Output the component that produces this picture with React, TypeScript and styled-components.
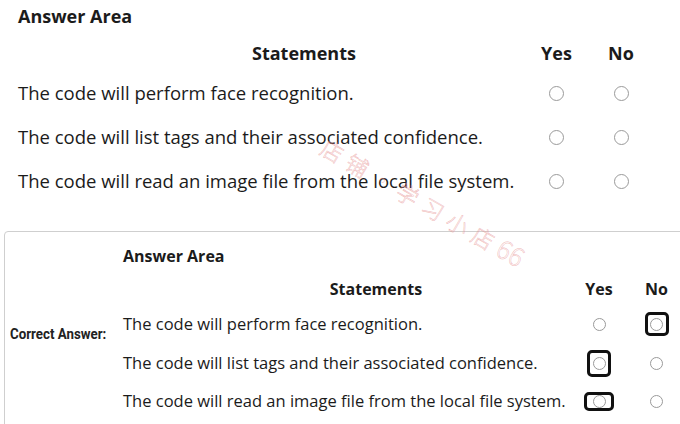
import React from "react";
import styled, { createGlobalStyle } from "styled-components";

const Global = createGlobalStyle`
  html, body { margin: 0; padding: 0; background: #ffffff; overflow: hidden; }
  body { font-family: "Open Sans", "Noto Sans", sans-serif; color: #1b1b1b; }
`;

const Page = styled.div`
  position: relative;
  width: 680px;
  height: 424px;
  overflow: hidden;
`;

const TopArea = styled.section`
  padding: 4px 0 0 18px;
`;

const Title = styled.div<{ $size: number }>`
  font-weight: 700;
  font-size: ${(p) => p.$size}px;
  line-height: ${(p) => p.$size + 6}px;
`;

const TopGrid = styled.div`
  display: grid;
  grid-template-columns: 507px 63px 66px;
  margin-top: 13px;
`;

const HeadCell = styled.div<{ $size: number; $shift?: number }>`
  font-weight: 700;
  font-size: ${(p) => p.$size}px;
  line-height: ${(p) => p.$size + 6}px;
  text-align: center;
  padding-left: ${(p) => p.$shift ?? 0}px;
  margin-bottom: ${(p) => (p.$size > 17 ? 6 : 5)}px;
`;

const Statement = styled.div<{ $size: number; $h: number }>`
  font-size: ${(p) => p.$size}px;
  line-height: ${(p) => p.$h}px;
  height: ${(p) => p.$h}px;
  white-space: nowrap;
`;

const RadioCell = styled.div<{ $h: number }>`
  height: ${(p) => p.$h}px;
  display: flex;
  align-items: center;
  justify-content: center;
`;

const Radio = styled.span<{ $d: number }>`
  display: block;
  box-sizing: border-box;
  width: ${(p) => p.$d}px;
  height: ${(p) => p.$d}px;
  border-radius: 50%;
  border: 1.5px solid #9a9a9a;
  background: #fff;
`;

const Picked = styled.span<{ $w: number; $h: number }>`
  box-sizing: border-box;
  width: ${(p) => p.$w}px;
  height: ${(p) => p.$h}px;
  border: 3.5px solid #111;
  border-radius: 5px;
  display: flex;
  align-items: center;
  justify-content: center;
`;

const AnswerBox = styled.section`
  margin: 28px 0 0 4px;
  width: 720px;
  height: 220px;
  border: 1px solid #cfcfcf;
  border-radius: 4px 0 0 0;
  padding-top: 13px;
  box-sizing: border-box;
`;

const BottomGrid = styled.div`
  display: grid;
  grid-template-columns: 118px 447px 58px 57px;
`;

const LabelCell = styled.div`
  grid-column: 1;
  padding-left: 5px;
`;

const CorrectLabel = styled.span`
  display: inline-block;
  margin-top: 21px;
  font-family: Roboto, "Liberation Sans", sans-serif;
  font-weight: 700;
  font-size: 14px;
  line-height: 16px;
  color: #222;
  white-space: nowrap;
  transform: scaleX(0.95);
  transform-origin: left center;
`;

const Watermark = styled.div`
  position: absolute;
  left: 333px;
  top: 128px;
  transform: rotate(30deg);
  transform-origin: left top;
  font-family: "Noto Sans CJK SC", sans-serif;
  font-weight: 300;
  font-size: 22px;
  letter-spacing: 7px;
  color: rgba(255, 255, 255, 0);
  -webkit-text-stroke: 0.5px rgba(232, 150, 150, 0.7);
  white-space: nowrap;
  pointer-events: none;
`;

const Digits = styled.span`
  font-size: 25px;
  letter-spacing: 0;
`;

type Row = { text: string; pick: "yes" | "no"; w: number; h: number };

const statements = [
  "The code will perform face recognition.",
  "The code will list tags and their associated confidence.",
  "The code will read an image file from the local file system.",
];

const answers: Row[] = [
  { text: statements[0], pick: "no", w: 24, h: 24 },
  { text: statements[1], pick: "yes", w: 24, h: 27 },
  { text: statements[2], pick: "yes", w: 30, h: 19 },
];

export default function App() {
  return (
    <Page>
      <Global />
      <TopArea>
        <Title $size={18}>Answer Area</Title>
        <TopGrid>
          <HeadCell $size={18} $shift={65}>Statements</HeadCell>
          <HeadCell $size={18}>Yes</HeadCell>
          <HeadCell $size={18}>No</HeadCell>
          {statements.map((s) => (
            <React.Fragment key={s}>
              <Statement $size={18.5} $h={44}>{s}</Statement>
              <RadioCell $h={44}><Radio $d={15} /></RadioCell>
              <RadioCell $h={44}><Radio $d={15} /></RadioCell>
            </React.Fragment>
          ))}
        </TopGrid>
      </TopArea>

      <AnswerBox>
        <BottomGrid>
          <div />
          <Title $size={16} style={{ gridColumn: "2 / 5" }}>Answer Area</Title>
          <div style={{ height: 11, gridColumn: "1 / 5" }} />
          <div />
          <HeadCell $size={16} $shift={59}>Statements</HeadCell>
          <HeadCell $size={16}>Yes</HeadCell>
          <HeadCell $size={16}>No</HeadCell>
          {answers.map((r, i) => (
            <React.Fragment key={r.text}>
              <LabelCell>{i === 0 && <CorrectLabel>Correct Answer:</CorrectLabel>}</LabelCell>
              <Statement $size={16.5} $h={38}>{r.text}</Statement>
              <RadioCell $h={38}>
                {r.pick === "yes" ? (
                  <Picked $w={r.w} $h={r.h}><Radio $d={13} /></Picked>
                ) : (
                  <Radio $d={13} />
                )}
              </RadioCell>
              <RadioCell $h={38}>
                {r.pick === "no" ? (
                  <Picked $w={r.w} $h={r.h}><Radio $d={13} /></Picked>
                ) : (
                  <Radio $d={13} />
                )}
              </RadioCell>
            </React.Fragment>
          ))}
        </BottomGrid>
      </AnswerBox>

      <Watermark>店铺·学习小店<Digits>66</Digits></Watermark>
    </Page>
  );
}
